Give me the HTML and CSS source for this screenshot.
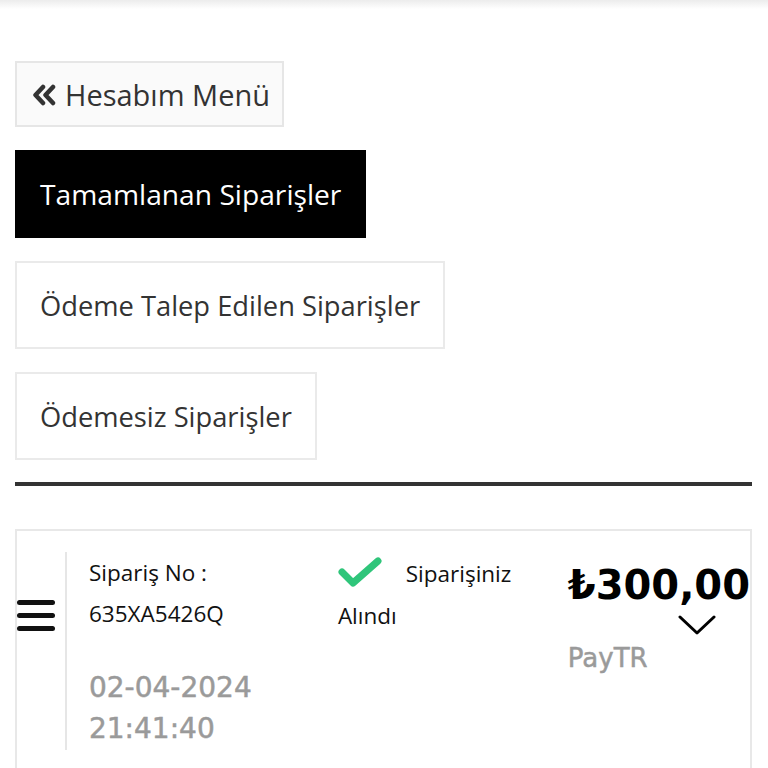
FILE: index.html
```html
<!DOCTYPE html>
<html lang="tr">
<head>
<meta charset="utf-8">
<title>Siparişlerim</title>
<link rel="stylesheet" href="styles.css">
</head>
<body>
<div class="topbar"></div>
<main class="page">
  <a class="btn btn-menu" href="#">
    <svg class="dbl" viewBox="0 0 26 22" width="26" height="22" aria-hidden="true">
      <path d="M12 3 L4.5 11 L12 19" fill="none" stroke="#333" stroke-width="4.5" stroke-linecap="round" stroke-linejoin="round"/>
      <path d="M22 3 L14.5 11 L22 19" fill="none" stroke="#333" stroke-width="4.5" stroke-linecap="round" stroke-linejoin="round"/>
    </svg>
    <span>Hesabım Menü</span>
  </a>
  <a class="btn btn-tab active" href="#">Tamamlanan Siparişler</a>
  <a class="btn btn-tab" href="#">Ödeme Talep Edilen Siparişler</a>
  <a class="btn btn-tab" href="#">Ödemesiz Siparişler</a>
  <hr class="divider">
  <section class="card">
    <div class="order">
      <div class="handle">
        <span class="bar"></span><span class="bar"></span><span class="bar"></span>
      </div>
      <div class="col col-info">
        <div class="label">Sipariş No :</div>
        <div class="code">635XA5426Q</div>
        <div class="date">02-04-2024<br>21:41:40</div>
      </div>
      <div class="col col-status">
        <svg class="check" viewBox="0 0 44 30" width="44" height="30" aria-hidden="true">
          <path d="M4 15 L15 26 L40 4" fill="none" stroke="#2fc57a" stroke-width="7" stroke-linecap="round" stroke-linejoin="round"/>
        </svg>
        <span class="status">Siparişiniz Alındı</span>
      </div>
      <div class="col col-price">
        <div class="price">₺300,00</div>
        <svg class="chev" viewBox="0 0 38 22" width="38" height="22" aria-hidden="true">
          <path d="M2 3 L19 19 L36 3" fill="none" stroke="#000" stroke-width="3" stroke-linecap="round" stroke-linejoin="round"/>
        </svg>
        <div class="method">PayTR</div>
      </div>
    </div>
  </section>
</main>
</body>
</html>
```
FILE: styles.css
```css
* { box-sizing: border-box; }
html, body { margin: 0; padding: 0; background: #fff; }
body {
  font-family: "Open Sans", "Noto Sans", sans-serif;
  color: #333;
  overflow: hidden;
  height: 768px;
}
.topbar {
  height: 9px;
  background: linear-gradient(#ececec, #ffffff);
}
.page {
  padding: 52px 16px 0 15px;
  display: flex;
  flex-direction: column;
  align-items: flex-start;
}
.btn {
  display: inline-flex;
  align-items: center;
  text-decoration: none;
  color: #333;
  border: 2px solid #e6e6e6;
  background: #fff;
}
.btn-menu {
  height: 66px;
  padding: 0 12px 0 14px;
  background: #fafafa;
  font-size: 29px;
  gap: 8px;
  margin-bottom: 23px;
}
.btn-menu .dbl { flex: none; margin-top: 2px; }
.btn-tab {
  height: 88px;
  padding: 0 23px;
  font-size: 27.3px;
  margin-bottom: 23px;
  border-color: #eaeaea;
}
.btn-tab.active {
  background: #000;
  border-color: #000;
  color: #fff;
  font-size: 28.2px;
}
.divider {
  align-self: stretch;
  margin: -1px 0 0 0;
  border: 0;
  height: 4px;
  background: #333;
}
.card {
  align-self: stretch;
  margin-top: 43px;
  border: 2px solid #e8e8e8;
  border-bottom: 0;
  height: 260px;
}
.order {
  display: flex;
  padding-top: 21px;
}
.handle {
  width: 48px;
  padding: 48px 0 0 0;
  display: flex;
  flex-direction: column;
  gap: 8px;
}
.bar {
  display: block;
  width: 38px;
  height: 5px;
  border-radius: 3px;
  background: #111;
}
.col-info {
  border-left: 2px solid #e6e6e6;
  padding-left: 22px;
  width: 273px;
  height: 198px;
}
.label, .code {
  font-size: 22.5px;
  color: #111;
  line-height: 41px;
}
.date {
  margin-top: 33px;
  font-family: "DejaVu Sans", sans-serif;
  font-size: 28px;
  color: #9a9a9a;
  line-height: 41px;
  -webkit-text-stroke: 0.5px #9a9a9a;
}
.col-status {
  width: 230px;
  font-size: 22.5px;
  color: #111;
  line-height: 42px;
  padding-top: 1px;
}
.check { vertical-align: -5px; margin-right: 18px; }
.col-price {
  flex: 1;
  display: flex;
  flex-direction: column;
  align-items: flex-start;
}
.price {
  font-family: "DejaVu Sans", sans-serif;
  font-size: 40px;
  font-weight: 700;
  color: #000;
  line-height: 50px;
  margin-top: 8px;
}
.chev { align-self: flex-end; margin: 4px 34px 0 0; }
.method {
  font-family: "DejaVu Sans", sans-serif;
  font-size: 26px;
  color: #9a9a9a;
  line-height: 34px;
  margin-top: 5px;
  -webkit-text-stroke: 0.5px #9a9a9a;
}
```
